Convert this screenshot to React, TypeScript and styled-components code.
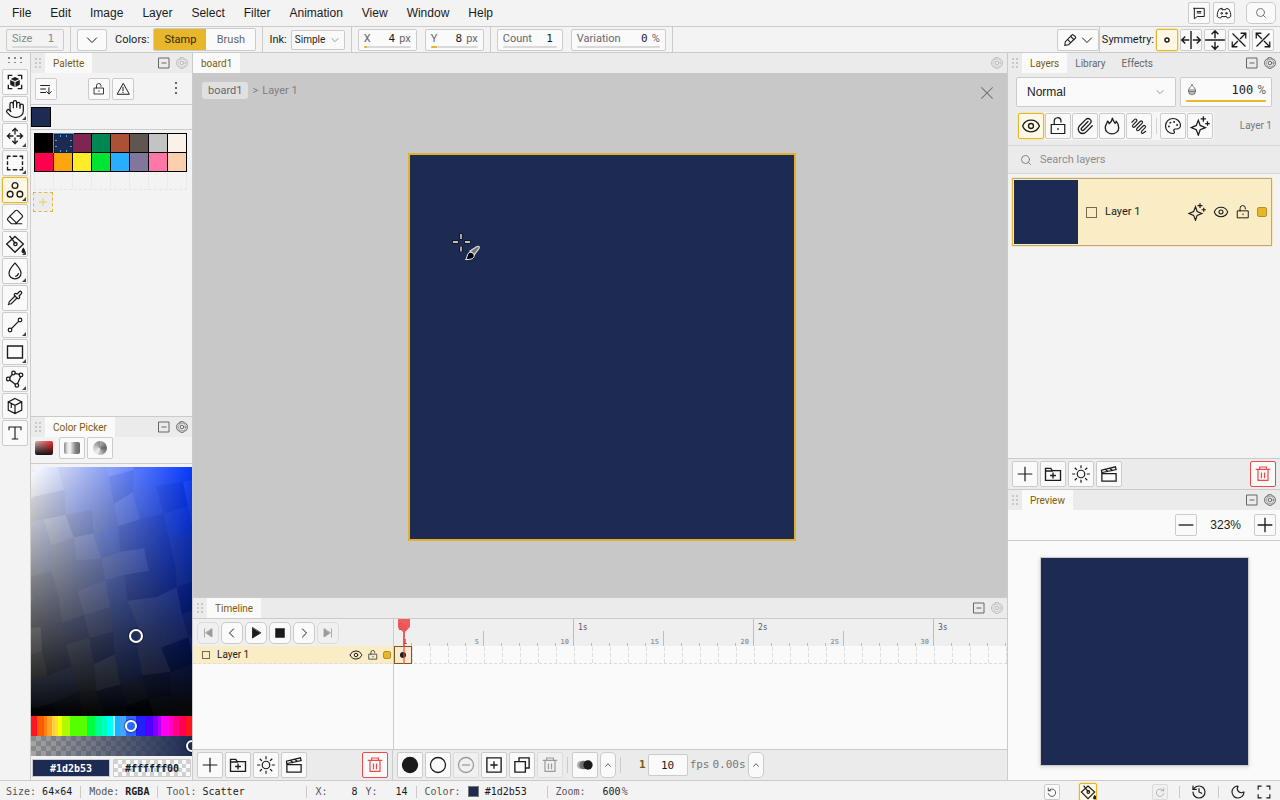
import React, { useLayoutEffect, useRef, useState } from "react";
import styled, { createGlobalStyle, css } from "styled-components";
import { Hand, Eraser, Pipette, Paperclip, Palette, Eye, History, Moon, Search } from "lucide-react";

const c = {
  line: "#cbcbcb",
  bar: "#ebebeb",
  bg: "#f3f3f3",
  soft: "#fafafa",
  ink: "#1b1b1d",
  dim: "#66666a",
  accent: "#e8b62a",
  accentText: "#7a5a08",
  row: "#faedc6",
  navy: "#1d2b53",
  red: "#f04848",
};
const mono = `"DejaVu Sans Mono", "Liberation Mono", monospace`;
const ui = `Roboto, "Noto Sans", sans-serif`;
const sans = `"Liberation Sans", Arial, sans-serif`;

const Global = createGlobalStyle`
  *, *::before, *::after { box-sizing: border-box; }
  body { margin: 0; background: ${c.bg}; color: ${c.ink}; font: 11px/14px ${ui}; }
  button, input, select { font: inherit; color: inherit; margin: 0; padding: 0; }
  button { cursor: pointer; }
  svg { display: block; flex: none; }
`;

/* ---------- icons ---------- */

const Svg = styled.svg`
  fill: none;
  stroke: currentColor;
  stroke-linecap: square;
  stroke-linejoin: miter;
`;

const shapes: Record<string, React.ReactNode> = {
  gear: (
    <>
      <path d="M9 1.500h6l1.500 2.500 3 .5 3 4v7l-3 4-3 .5-1.500 2.500H9L7.500 20l-3-.5-3-4v-7l3-4 3-.5z" />
      <circle cx="12" cy="12" r="7.500" strokeWidth="1" />
      <circle cx="12" cy="12" r="3.700" />
    </>
  ),
  collapse: <path d="M2 2h20v20H2zM8 12h8" />,
  plus: <path d="M12 2v20M2 12h20" />,
  minus: <path d="M2 12h20" />,
  close: <path d="M4 4l16 16M20 4L4 20" />,
  chevron: <path d="M3 8l9 9 9-9" />,
  chevronUp: <path d="M5 16l7-8 7 8" />,
  prev: <path d="M15 4l-8 8 8 8" />,
  next: <path d="M9 4l8 8-8 8" />,
  first: <path fill="currentColor" d="M5 4v16M20 4v16L8 12z" />,
  last: <path fill="currentColor" d="M19 4v16M4 4v16l12-8z" />,
  play: <path fill="currentColor" d="M5 2v20l16-10z" />,
  stop: <path fill="currentColor" d="M4 4h16v16H4z" />,
  lock: <path d="M3 10h18v12H3zM7 10V6a4.500 4.500 0 0 1 9-1v1.500M12 15.500v1" />,
  warn: <path d="M12 3L2 21h20zM12 9v6M12 18v.2" />,
  sort: <path d="M3 6h15M3 12h8M3 18h8M17 10v10M13 16.500l4 4 4-4" />,
  pen: <path d="M3 21l1-6L15 3.500q1.500-1.500 3 0L21 6q1.500 1.500 0 3L9.500 20zM13 5.500l5.500 6M8 11l5 5.500" />,
  box3d: (
    <>
      <path d="M2 7V2h5M17 2h5v5M22 17v5h-5M7 22H2v-5" />
      <path fill="currentColor" stroke="none" d="M12 4.500l6.500 3L12 10.500l-6.500-3zM4.800 9l6.500 3v7.500l-6.500-3.500zM19.200 9l-6.500 3v7.500l6.500-3.500z" />
    </>
  ),
  move: <path d="M12 2v7M12 15v7M2 12h7M15 12h7M9 5l3-3 3 3M9 19l3 3 3-3M5 9l-3 3 3 3M19 9l3 3-3 3" />,
  marquee: <path strokeLinecap="butt" d="M2 7V3h4M9 3h6M18 3h4v4M22 9.500v5M22 17v4h-4M15 21H9M6 21H2v-4M2 14.500v-5" />,
  scatter: (
    <>
      <circle cx="12" cy="6" r="3.800" />
      <circle cx="5.500" cy="17.500" r="3.800" />
      <circle cx="18.500" cy="17.500" r="3.800" />
    </>
  ),
  bucket: (
    <>
      <path d="M12 3l10 9-10 10L2 12zM6 3l6 8" />
      <circle cx="12.500" cy="12" r="2" />
      <path fill="currentColor" d="M22 17.500c1.500 2 1.800 3 1.500 4s-2.500 1-2.800 0 .3-2.500 1.300-4z" />
    </>
  ),
  waterdrop: <path d="M12 1.500C8 6 4 10 4 15a8 7.500 0 0 0 16 0c0-5-4-9-8-13.500zM16.500 15.500c-.3 2-1.500 3-3.500 3.500" />,
  line: (
    <>
      <circle cx="19.500" cy="4.500" r="2.700" />
      <circle cx="4.500" cy="19.500" r="2.700" />
      <path d="M17 7L7 17" />
    </>
  ),
  rect: <path d="M2 4h20v16H2z" />,
  polygon: (
    <>
      <circle cx="10" cy="4" r="2.400" />
      <circle cx="20" cy="6.500" r="2.400" />
      <circle cx="3" cy="12" r="2.400" />
      <circle cx="14.500" cy="20.500" r="2.400" />
      <path d="M12.300 4.500l5.300 1.300M8.300 6L5 10M5 13.500l7.300 5.500M19.500 9l-4 9" />
    </>
  ),
  cube: <path d="M12 2l9 4.500v11L12 22l-9-4.500v-11zM3 6.500l9 4.500 9-4.500M12 11v11M7 9v5" />,
  text: <path d="M3 7V3h18v4M12 3v18M8 21h8" />,
  flame: <path strokeLinejoin="round" d="M12.500 1.500c.5 3 2.500 4.500 3.500 7 1-.5 1.500-1.500 1.500-3 2.500 2.500 3.500 6 3.500 9a9 8 0 0 1-18 0C3 10 5.500 9 6 5.500c1.500 1 2 2 2.200 3.500C10.500 7.500 12 4.500 12.500 1.500z" />,
  squiggle: <path strokeLinecap="round" d="M2.500 7L6 3.500c2-2 4.500.5 2.500 2.500L4 10.500c-2 2 .5 4.500 2.500 2.500l7-7c2-2 4.500.5 2.500 2.500L9.500 15c-2 2 .5 4.500 2.500 2.500l5.500-5.500c2-2 4.500.5 2.500 2.500L16 18.500c-1.500 2-.5 3.500 1 3.500l4-3" />,
  sparkle: <path d="M10 5l2.200 6.300L18.500 14l-6.300 2.500L10 23l-2.500-6.500L1.500 14l6-2.700zM16 1v5M13.500 3.500h5M21 7v4M19 9h4" />,
  folder: <path d="M2 20.500v-16h7l2 3h11v13zM2 8h9M12 11v6M9 14h6" />,
  sun: (
    <>
      <circle cx="12" cy="12" r="5" />
      <path d="M12 1v2.500M12 20.500V23M1 12h2.500M20.500 12H23M4.200 4.200L6 6M18 18l1.800 1.800M4.200 19.800L6 18M18 6l1.800-1.800" />
    </>
  ),
  clapper: <path d="M2.500 11.500h19v10h-19zM2.500 11.500L2 7l18.500-4.500 1 3.500L3 10M7.500 6l2.500 2.500M13.500 4.500L16 7" />,
  trash: <path d="M4.500 5.500v16h15v-16M2 5h20M7 5V1.500h10V5M9.700 10.500v7M14.300 10.500v7" />,
  disc: <circle fill="currentColor" cx="12" cy="12" r="10" />,
  ring: <circle cx="12" cy="12" r="10" />,
  ringMinus: (
    <>
      <circle cx="12" cy="12" r="10" />
      <path d="M7.500 12h9" />
    </>
  ),
  boxPlus: <path d="M2.500 2.500h19v19h-19zM12 8v8M8 12h8" />,
  copy: <path d="M2.500 7.500h14v14h-14zM8 7V2.500h13.500V16H17" />,
  onion: (
    <>
      <circle fill="#b4b4b4" stroke="none" cx="6" cy="12" r="6" />
      <circle fill="#707070" stroke="none" cx="10" cy="12" r="6.500" />
      <circle fill="#1b1b1d" stroke="none" cx="16.500" cy="12" r="7" />
    </>
  ),
  chat: <path d="M3 4h18v14H9l-5 4V4M9 9.500h6M9 12h6" />,
  discord: (
    <>
      <path d="M8.500 5l-3.500 1C2.500 9.500 1.500 13.500 2 17.500c2 1.500 3.500 2 5 2l1.500-2.500c2.500.7 4.500.7 7 0l1.500 2.500c1.500 0 3-.5 5-2 .5-4-.5-8-3-11.500L15.500 5l-1 2h-5z" />
      <circle cx="8.500" cy="12.500" r="1.200" />
      <circle cx="15.500" cy="12.500" r="1.200" />
    </>
  ),
  dot: <circle cx="12" cy="12" r="3.500" strokeWidth="2.500" />,
  symH: <path d="M12 2v20M9 12H1M15 12h8M4.500 8.500L1 12l3.500 3.500M19.500 8.500L23 12l-3.500 3.500" />,
  symV: <path d="M1 12h22M12 9V1M12 15v8M8.500 4.500L12 1l3.500 3.500M8.500 19.500L12 23l3.500-3.500" />,
  symD1: <path d="M4 4l16 16M14 10l7-7M10 14l-7 7M15 3h6v6M3 15v6h6" />,
  symD2: <path d="M20 4L4 20M10 10L3 3M14 14l7 7M9 3H3v6M15 21h6v-6" />,
  drop: <path d="M12 2C8 6 5 10 5 14.500a7 7 0 0 0 14 0C19 10 16 6 12 2zM5 12h14M5.500 15h13M7 18h10" />,
  undo: <path d="M3 3v6h6M4 9a9 9 0 1 1-1 7" />,
  redo: <path d="M21 3v6h-6M20 9a9 9 0 1 0 1 7" />,
  full: <path d="M2 7V2h5M17 2h5v5M22 17v5h-5M7 22H2v-5" />,
};

function Icon({ name, size = 18, w = 1.7 }: { name: string; size?: number; w?: number }) {
  return (
    <Svg width={size} height={size} viewBox="0 0 24 24" strokeWidth={w} aria-hidden="true">
      {shapes[name]}
    </Svg>
  );
}

/* ---------- shared parts ---------- */

const Spacer = styled.div`
  flex: 1;
`;

const IconButton = styled.button<{ $s?: number; $w?: number; $on?: boolean; $danger?: boolean; $corner?: boolean; $round?: boolean }>`
  position: relative;
  display: flex;
  align-items: center;
  justify-content: center;
  gap: 4px;
  flex: none;
  width: ${(p) => p.$w ?? p.$s ?? 22}px;
  height: ${(p) => p.$s ?? 22}px;
  border: 1px solid ${c.line};
  border-radius: ${(p) => (p.$round ? 5 : 2)}px;
  background: ${c.soft};
  color: ${c.ink};
  ${(p) => p.$on && css`border-color: ${c.accent}; background: #fff8e4; box-shadow: 0 0 0 1px #f4e7c0;`}
  ${(p) => p.$danger && css`border-color: ${c.red}; color: ${c.red};`}
  &:disabled { color: #9b9b9b; background: #f0f0f0; border-color: #dcdcdc; cursor: default; }
  ${(p) => p.$corner && css`
    &::after {
      content: "";
      position: absolute;
      right: 1px;
      bottom: 1px;
      border: 2px solid transparent;
      border-right-color: #444;
      border-bottom-color: #444;
    }
  `}
`;

const Divider = styled.span<{ $h?: number }>`
  flex: none;
  width: 1px;
  height: ${(p) => (p.$h ? `${p.$h}px` : "auto")};
  align-self: ${(p) => (p.$h ? "center" : "stretch")};
  background: ${c.line};
`;

/* ---------- menu ---------- */

const Page = styled.div`
  display: flex;
  flex-direction: column;
  height: 100vh;
  overflow: hidden;
`;

const MenuBar = styled.header`
  display: flex;
  align-items: center;
  flex: none;
  height: 27px;
  padding: 0 4px 0 12px;
  gap: 3px;
  border-bottom: 1px solid ${c.line};
`;

const Menu = styled.nav`
  display: flex;
  gap: 19px;
  flex: 1;
`;

const MenuItem = styled.button`
  border: 0;
  background: none;
  font: 12px/16px ${sans};
`;

const SearchButton = styled(IconButton)`
  margin-left: 8px;
`;

/* ---------- tool options ---------- */

const Options = styled.div`
  display: flex;
  align-items: center;
  flex: none;
  height: 26px;
  padding: 0 6px;
  gap: 6px;
  border-bottom: 1px solid ${c.line};
`;

const OptionGroup = styled.div<{ $gap?: number }>`
  display: flex;
  align-items: center;
  align-self: stretch;
  gap: ${(p) => p.$gap ?? 8}px;
`;

const FieldBox = styled.label<{ $w: number; $off?: boolean }>`
  display: grid;
  grid-template-columns: auto 1fr auto;
  align-items: center;
  column-gap: 4px;
  width: ${(p) => p.$w}px;
  height: 22px;
  padding: 2px 5px;
  border: 1px solid ${c.line};
  border-radius: 2px;
  background: ${(p) => (p.$off ? c.bg : c.soft)};
  color: ${(p) => (p.$off ? "#8a8a8a" : c.dim)};
  line-height: 14px;
`;

const FieldUnit = styled.span`
  &:empty { margin-left: -4px; }
`;

const FieldValue = styled.input`
  width: 100%;
  min-width: 0;
  height: 14px;
  border: 0;
  background: none;
  text-align: right;
  font-family: ${mono};
  color: ${c.ink};
  &:disabled { color: #8a8a8a; }
`;

const Track = styled.input`
  appearance: none;
  grid-column: 1 / -1;
  display: block;
  width: 100%;
  height: 2px;
  border-radius: 1px;
  background: linear-gradient(${c.accent}, ${c.accent}) 0 0 / var(--fill) 100% no-repeat #d9d9d9;
  &::-webkit-slider-thumb { appearance: none; width: 1px; height: 2px; }
`;

function Field({ label, value, unit, width, fill = 0, off }: { label: string; value: string; unit?: string; width: number; fill?: number; off?: boolean }) {
  return (
    <FieldBox $w={width} $off={off}>
      <span>{label}</span>
      <FieldValue defaultValue={value} disabled={off} aria-label={label} />
      <FieldUnit>{unit}</FieldUnit>
      <Track type="range" defaultValue={fill} disabled={off} aria-label={`${label} slider`} style={{ "--fill": `${fill}%` } as React.CSSProperties} />
    </FieldBox>
  );
}

const Segments = styled.div`
  display: flex;
  height: 23px;
  border: 1px solid ${c.line};
  border-radius: 2px;
  overflow: hidden;
`;

const Segment = styled.button<{ $on?: boolean }>`
  width: ${(p) => (p.$on ? 52 : 49)}px;
  border: 0;
  background: ${(p) => (p.$on ? c.accent : c.soft)};
  color: ${(p) => (p.$on ? "#33270a" : c.dim)};
`;

const SelectBox = styled.div<{ $h: number; $w?: number }>`
  display: grid;
  align-items: center;
  height: ${(p) => p.$h}px;
  ${(p) => (p.$w ? `width: ${p.$w}px` : "flex: 1")};
  border: 1px solid ${c.line};
  border-radius: 2px;
  background: ${c.soft};
  & > * { grid-area: 1 / 1; }
  & > svg { justify-self: end; margin-right: ${(p) => (p.$h > 24 ? 11 : 5)}px; pointer-events: none; color: ${c.dim}; }
`;

const Select = styled.select<{ $big?: boolean }>`
  appearance: none;
  width: 100%;
  height: 100%;
  padding: 0 ${(p) => (p.$big ? 10 : 3)}px;
  border: 0;
  background: none;
  font: ${(p) => (p.$big ? `12px/16px ${sans}` : `10px/14px ${ui}`)};
`;

/* ---------- docks ---------- */

const Main = styled.main`
  display: flex;
  flex: 1;
  min-height: 0;
`;

const Tools = styled.aside`
  display: flex;
  flex-direction: column;
  flex: none;
  width: 31px;
  padding: 4px 2px;
  gap: 1px;
  border-right: 1px solid ${c.line};
`;

const ToolGrip = styled.span`
  width: 14px;
  height: 6px;
  margin: 0 6px 5px;
  background: radial-gradient(circle at 1px 1px, #888 1px, transparent 1px) 0 0 / 6px 5px;
`;

const Dock = styled.section<{ $w?: number }>`
  display: flex;
  flex-direction: column;
  min-width: 0;
  ${(p) => (p.$w ? `flex: none; width: ${p.$w}px` : "flex: 1")};
`;

const LeftDock = styled(Dock)`
  border-right: 1px solid ${c.line};
`;

const CenterDock = styled(Dock)`
  border-right: 1px solid ${c.line};
`;

const Panel = styled.section<{ $grow?: boolean; $top?: boolean }>`
  display: flex;
  flex-direction: column;
  flex: ${(p) => (p.$grow ? "1" : "none")};
  min-height: 0;
  border-top: ${(p) => (p.$top ? `1px solid ${c.line}` : "0")};
`;

const TabBar = styled.div`
  display: flex;
  align-items: center;
  flex: none;
  height: 20px;
  padding-right: 4px;
  gap: 6px;
  background: ${c.bar};
`;

const Grip = styled.span`
  width: 6px;
  height: 10px;
  margin: 0 -2px 0 4px;
  background: radial-gradient(circle at 1px 1px, #c8c8c8 1px, transparent 1px) 0 0 / 4px 4px;
`;

const TabList = styled.div`
  display: flex;
  flex: 1;
  height: 100%;
`;

const Tab = styled.button<{ $on?: boolean }>`
  height: 100%;
  padding: 2px 8px 0;
  border: 0;
  font-size: 10px;
  background: ${(p) => (p.$on ? c.soft : "none")};
  color: ${(p) => (p.$on ? c.accentText : c.dim)};
`;

const TabAction = styled.button`
  border: 0;
  background: none;
  color: ${c.dim};
  &:disabled { color: #b9b9b9; }
`;

function Tabs({ names, grip = true, collapse = true, gearOff }: { names: string[]; grip?: boolean; collapse?: boolean; gearOff?: boolean }) {
  return (
    <TabBar>
      {grip && <Grip />}
      <TabList role="tablist">
        {names.map((n, i) => (
          <Tab key={n} role="tab" aria-selected={i === 0} $on={i === 0}>{n}</Tab>
        ))}
      </TabList>
      {collapse && <TabAction aria-label="Collapse"><Icon name="collapse" size={12} w={2} /></TabAction>}
      <TabAction aria-label="Panel settings" disabled={gearOff}><Icon name="gear" size={12} w={2} /></TabAction>
    </TabBar>
  );
}

/* ---------- palette ---------- */

const PaletteBar = styled.div`
  display: flex;
  align-items: center;
  height: 32px;
  padding: 0 4px;
  gap: 2px;
  border-bottom: 1px solid ${c.line};
`;

const PaletteActions = styled.div`
  display: flex;
  gap: 2px;
  flex: 1;
  margin-left: 29px;
`;

const Kebab = styled.button`
  display: flex;
  align-items: center;
  justify-content: center;
  width: 24px;
  height: 22px;
  border: 0;
  background: none;
  color: ${c.dim};
`;

const CurrentRow = styled.div`
  padding: 2px 0;
  height: 25px;
  border-bottom: 1px solid ${c.line};
`;

const Current = styled.button`
  display: block;
  width: 20px;
  height: 20px;
  border: 1px solid #000;
  background: ${c.navy};
`;

const SwatchGrid = styled.div`
  display: grid;
  grid-template-columns: repeat(8, 19px);
  grid-auto-rows: 19px;
  width: 153px;
  margin: 3px 0 0 3px;
  border: solid #000;
  border-width: 1px 0 0 1px;
`;

const Swatch = styled.button<{ $c: string; $sel?: boolean }>`
  border: 0 solid #000;
  border-width: 0 1px 1px 0;
  background: ${(p) => p.$c};
  ${(p) => p.$sel && css`
    border: 1px solid #15203f;
    outline: 1px solid #4f94c4;
    background:
      linear-gradient(90deg, transparent 5px, #29adff 5px 6px, transparent 6px 11px, #29adff 11px 12px, transparent 12px) 0 0 / 100% 2px no-repeat,
      linear-gradient(90deg, transparent 5px, #29adff 5px 6px, transparent 6px 11px, #29adff 11px 12px, transparent 12px) 0 100% / 100% 2px no-repeat,
      linear-gradient(transparent 5px, #29adff 5px 6px, transparent 6px 11px, #29adff 11px 12px, transparent 12px) 0 0 / 2px 100% no-repeat,
      linear-gradient(transparent 5px, #29adff 5px 6px, transparent 6px 11px, #29adff 11px 12px, transparent 12px) 100% 0 / 2px 100% no-repeat,
      ${p.$c};
  `}
`;

const EmptyRow = styled.div`
  width: 153px;
  height: 18px;
  margin-left: 3px;
  border-bottom: 1px dashed #e6e6e6;
  background: repeating-linear-gradient(90deg, #eaeaea 0 1px, transparent 1px 19px);
`;

const AddSwatch = styled.button`
  display: flex;
  align-items: center;
  justify-content: center;
  width: 20px;
  height: 20px;
  margin: 2px;
  border: 1px dashed ${c.accent};
  background: #ececec;
  color: #ecd28a;
`;

const swatches = [
  "#000000", "#1d2b53", "#7e2553", "#008751", "#ab5236", "#5f574f", "#c2c3c3", "#faf1e8",
  "#ff004d", "#ffa50f", "#ffec27", "#00e436", "#29adff", "#83769c", "#ff77a8", "#fbcfae",
];

/* ---------- colour picker ---------- */

const PickerBar = styled.div`
  display: flex;
  height: 27px;
  padding: 0 4px;
  gap: 2px;
  border-bottom: 1px solid ${c.line};
`;

const Mode = styled.button<{ $on?: boolean }>`
  display: flex;
  align-items: center;
  justify-content: center;
  width: ${(p) => (p.$on ? 18 : 26)}px;
  height: 22px;
  margin-right: ${(p) => (p.$on ? 4 : 0)}px;
  border: ${(p) => (p.$on ? "0" : `1px solid ${c.line}`)};
  border-radius: 2px;
  background: ${(p) => (p.$on ? "none" : c.soft)};
`;

const ModeArt = styled.span<{ $kind: "field" | "bars" | "wheel" }>`
  width: ${(p) => (p.$kind === "field" ? 18 : p.$kind === "bars" ? 16 : 14)}px;
  height: ${(p) => (p.$kind === "bars" ? 12 : 14)}px;
  border-radius: ${(p) => (p.$kind === "wheel" ? "50%" : "2px")};
  background: ${(p) =>
    p.$kind === "field"
      ? "linear-gradient(0deg, #111, transparent), linear-gradient(90deg, #c9b5b5, #ff2424)"
      : p.$kind === "bars"
      ? "linear-gradient(90deg, #888, #eee 25% 40%, #bbb 55%, #888 70%, #666)"
      : "conic-gradient(#aaa, #666 25%, #999 40%, #eee 60%, #ccc 75%, #888)"};
`;

const ColorField = styled.div`
  position: relative;
  height: 249px;
  margin-top: 3px;
  overflow: hidden;
  background: linear-gradient(180deg, transparent, #000 98%), linear-gradient(90deg, #fff, #0033ff);
  & > svg { width: 100%; height: 100%; }
`;

const Handle = styled.span<{ $d: number }>`
  position: absolute;
  width: ${(p) => p.$d}px;
  height: ${(p) => p.$d}px;
  border: 2px solid #fff;
  border-radius: 50%;
  box-shadow: 0 0 1px 1px rgba(0, 0, 0, 0.4);
  transform: translate(-50%, -50%);
  pointer-events: none;
`;

const hues: [string, number][] = [
  ["#ff1420", 0], ["#ff5a00", 4], ["#ff8210", 8], ["#ffa423", 10], ["#fcd045", 13], ["#ffe22b", 15], ["#f8ff00", 17],
  ["#b2f800", 19], ["#55ff00", 24], ["#00ff40", 35], ["#00ff92", 40], ["#00ffc0", 44], ["#00ffff", 47], ["#b8f0ff", 51],
  ["#10b8ff", 52], ["#4aa2ff", 55], ["#2a68ff", 59], ["#2222ff", 65], ["#5000ff", 71], ["#8000ff", 76], ["#b400ff", 79],
  ["#ff00f2", 81], ["#ff00ba", 86], ["#ff0088", 89], ["#ff0050", 92], ["#ff1420", 96], ["#ff1420", 100],
];
const hueStops = hues.slice(0, -1).map(([h, s], i) => `${h} ${s}% ${hues[i + 1][1]}%`).join(", ");
const checks = "repeating-conic-gradient(#a6a6a6 0 25%, #8b8b8b 0 50%) 0 0 / 10px 10px";

const Strip = styled.div<{ $alpha?: boolean }>`
  position: relative;
  height: 20px;
  overflow: hidden;
  background: ${(p) => (p.$alpha ? `linear-gradient(90deg, transparent, ${c.navy}), ${checks}` : `linear-gradient(90deg, ${hueStops})`)};
`;

const StripInput = styled.input`
  appearance: none;
  display: block;
  width: 100%;
  height: 100%;
  background: none;
  &::-webkit-slider-thumb { appearance: none; width: 1px; height: 20px; }
`;

const HexRow = styled.div`
  display: flex;
  gap: 3px;
  padding: 3px 1px;
`;

const Hex = styled.button<{ $clear?: boolean }>`
  flex: 1;
  height: 18px;
  padding-top: 1px;
  border: 1px solid ${c.line};
  border-radius: 1px;
  font: bold 10px/14px ${mono};
  color: ${(p) => (p.$clear ? c.ink : "#fff")};
  background: ${(p) => (p.$clear ? "repeating-conic-gradient(#fafafa 0 25%, #d0d0d0 0 50%) 0 0 / 8px 8px" : c.navy)};
`;

const noise = (n: number) => {
  const v = Math.sin(n * 127.1) * 43758.5453;
  return v - Math.floor(v);
};

/* Angular facets laid over the smooth field. */
function Facets() {
  const cols = 7;
  const rows = 10;
  const pt = (i: number, j: number) => {
    const k = i * 31 + j * 7 + 3;
    return [((i + j * 0.2 + noise(k) * 0.3) * 161) / cols, ((j + noise(k + 99) * 0.3 - i * 0.25) * 249) / rows];
  };
  const cells = [];
  for (let j = -1; j <= rows + 3; j++)
    for (let i = -4; i <= cols + 1; i++) {
      const pts = [pt(i, j), pt(i + 1, j), pt(i + 1, j + 1), pt(i, j + 1)].map((p) => p.join(",")).join(" ");
      const tone = ["#ffffff", "#203060", "#6a94ff", "#a09a90"][Math.floor(noise(i * 17 + j * 5 + 40) * 4)];
      cells.push(<polygon key={`${i}/${j}`} points={pts} fill={tone} opacity={j > 8 ? 0.03 : 0.07} />);
    }
  return <svg viewBox="0 0 161 249" preserveAspectRatio="none" aria-hidden="true">{cells}</svg>;
}

/* ---------- viewport ---------- */

const Viewport = styled.div`
  position: relative;
  display: flex;
  flex: 1;
  align-items: center;
  justify-content: center;
  min-height: 0;
  padding: 24px 0 0 4px;
  background: #c8c8c8;
`;

const Artboard = styled.div`
  position: relative;
  flex: none;
  width: 388px;
  height: 388px;
  border: 2px solid #e2b02c;
  background: ${c.navy};
`;

const Cursor = styled.svg`
  position: absolute;
  left: 41px;
  top: 76px;
`;

const Crumbs = styled.nav`
  position: absolute;
  left: 9px;
  top: 9px;
  display: flex;
  align-items: center;
  gap: 4px;
  color: #7e7e82;
`;

const Crumb = styled.button`
  height: 17px;
  padding: 0 6px;
  border: 0;
  border-radius: 3px;
  background: #e0e0e0;
  color: #66666a;
`;

const CloseButton = styled.button`
  position: absolute;
  right: 12px;
  top: 12px;
  border: 0;
  background: none;
  color: #77777a;
`;

/* ---------- timeline ---------- */

const TimelineBody = styled.div`
  display: flex;
  height: 131px;
  border-top: 1px solid ${c.line};
  background: ${c.soft};
`;

const TrackList = styled.div`
  flex: none;
  width: 201px;
  border-right: 1px solid ${c.line};
`;

const Playback = styled.div`
  display: flex;
  align-items: center;
  height: 27px;
  padding: 0 4px;
  gap: 2px;
  background: #efefef;
`;

const TrackRow = styled.div`
  display: flex;
  align-items: center;
  height: 18px;
  padding: 0 2px 0 9px;
  gap: 7px;
  background: ${c.row};
  border-bottom: 1px dashed #ddd;
  font-size: 10px;
`;

const RowIcons = styled.span<{ $gap: number }>`
  display: flex;
  align-items: center;
  gap: ${(p) => p.$gap}px;
`;

const Check = styled.input<{ $d: number }>`
  appearance: none;
  flex: none;
  width: ${(p) => p.$d}px;
  height: ${(p) => p.$d}px;
  border: 1px solid #77694a;
`;

const RowName = styled.span`
  flex: 1;
`;

const Chip = styled.span<{ $d: number }>`
  flex: none;
  width: ${(p) => p.$d}px;
  height: ${(p) => p.$d}px;
  border: 1px solid #b8902a;
  border-radius: 2px;
  background: ${c.accent};
`;

const Plain = styled.button`
  border: 0;
  background: none;
`;

const Frames = styled.div`
  position: relative;
  flex: 1;
  min-width: 0;
  overflow: hidden;
`;

const Ruler = styled.div`
  display: flex;
  height: 27px;
  background: #efefef;
`;

const Tick = styled.div<{ $n: number }>`
  display: flex;
  flex-direction: column;
  justify-content: flex-end;
  flex: none;
  width: 18px;
  height: 27px;
  padding-right: 5px;
  text-align: right;
  font: bold 7px/8px ${mono};
  color: ${(p) => (p.$n === 1 ? c.accentText : "#9a9a9e")};
  background: linear-gradient(#bdbdbd, #bdbdbd) 100% 100% / 1px ${(p) => (p.$n % 10 === 0 ? 27 : p.$n % 5 === 0 ? 15 : 3)}px no-repeat;
`;

const Seconds = styled.span`
  position: absolute;
  top: 4px;
  font: 8px/10px ${mono};
  color: #55555a;
`;

const Cells = styled.div`
  height: 18px;
  border-bottom: 1px dashed #dcdcdc;
  background: repeating-linear-gradient(0deg, transparent 0 4px, ${c.soft} 4px 6px),
    linear-gradient(90deg, #dedede 1px, transparent 1px) 0 0 / 18px 100%;
`;

const Cell = styled.button`
  display: flex;
  align-items: center;
  justify-content: center;
  width: 18px;
  height: 18px;
  border: 1px solid #80581a;
  background: #f7ead0;
  &::before { content: ""; width: 6px; height: 6px; border-radius: 50%; background: #1b1b1d; }
`;

const Playhead = styled.svg`
  position: absolute;
  left: 4px;
  top: 0;
`;

const FRAME = 18;

function FrameGrid() {
  const ref = useRef<HTMLDivElement>(null);
  const [count, setCount] = useState(0);
  useLayoutEffect(() => {
    const el = ref.current!;
    const measure = () => setCount(Math.floor(el.clientWidth / FRAME));
    measure();
    const watch = new ResizeObserver(measure);
    watch.observe(el);
    return () => watch.disconnect();
  }, []);
  const seconds = Math.floor((count - 1) / 10) + 1;
  return (
    <Frames ref={ref}>
      <Ruler>
        {Array.from({ length: count }, (_, i) => i + 1).map((n) => (
          <Tick key={n} $n={n}>{n % 5 === 0 || n === 1 ? n : ""}</Tick>
        ))}
      </Ruler>
      {Array.from({ length: seconds }, (_, s) => (
        <Seconds key={s} style={{ left: s * FRAME * 10 + 4 }}>{s}s</Seconds>
      ))}
      <Cells><Cell aria-label="Frame 1" /></Cells>
      <Playhead width="12" height="45" viewBox="0 0 12 45" aria-hidden="true">
        <path d="M0 0h12v8l-5 5v14H5V13L0 8z" fill={c.red} fillOpacity=".88" />
        <path d="M5 27h2v18H5z" fill={c.red} opacity=".6" />
      </Playhead>
    </Frames>
  );
}

const Footer = styled.div`
  display: flex;
  align-items: center;
  height: 31px;
  border-top: 1px solid ${c.line};
  background: ${c.bar};
`;

const FooterGroup = styled.div<{ $w?: number }>`
  display: flex;
  align-items: center;
  gap: 2px;
  padding: 0 4px;
  ${(p) => p.$w && `width: ${p.$w}px`};
`;

const FooterEnd = styled(FooterGroup)`
  font: 11px/14px ${mono};
  color: #77777c;
  margin-left: 14px;
`;

const FrameNo = styled.b`
  color: ${c.accentText};
`;

const Fps = styled.input`
  width: 40px;
  height: 22px;
  border: 1px solid ${c.line};
  border-radius: 2px;
  background: ${c.soft};
  color: ${c.ink};
  text-align: center;
`;

/* ---------- layers ---------- */

const LayerHead = styled.div`
  display: flex;
  flex-direction: column;
  gap: 5px;
  padding: 4px 8px 5px;
  background: ${c.bar};
  border-bottom: 1px solid #d6d6d6;
`;

const HeadRow = styled.div`
  display: flex;
  align-items: center;
  gap: 4px;
`;

const Opacity = styled.label`
  display: grid;
  grid-template-columns: 12px 1fr auto;
  align-items: center;
  column-gap: 4px;
  width: 92px;
  height: 30px;
  padding: 3px 5px;
  border: 1px solid ${c.line};
  border-radius: 2px;
  background: ${c.soft};
  color: ${c.dim};
  font-size: 12px;
`;

const Filters = styled.div`
  display: flex;
  align-items: center;
  gap: 1px;
  margin-left: 1px;
  padding: 1px;
  border-radius: 3px;
  background: #f6f6f6;
`;

const FilterGap = styled.span`
  width: 1px;
  height: 16px;
  margin: 0 2px 0 3px;
  background: #d4d4d4;
`;

const LayerHint = styled.span`
  flex: 1;
  text-align: right;
  font-size: 10px;
  color: #77777c;
`;

const SearchRow = styled.label`
  display: flex;
  align-items: center;
  gap: 8px;
  height: 28px;
  padding: 0 12px;
  background: ${c.bar};
  border-bottom: 1px solid #d6d6d6;
  color: #77777c;
`;

const SearchInput = styled.input`
  flex: 1;
  border: 0;
  background: none;
  &::placeholder { color: #8d8d90; opacity: 1; }
`;

const LayerList = styled.div`
  flex: 1;
  padding: 4px 8px 4px 4px;
`;

const LayerItem = styled.div`
  display: flex;
  align-items: center;
  height: 68px;
  padding: 0 4px 0 1px;
  gap: 8px;
  border: 1px solid #b9a97c;
  border-left-color: ${c.accent};
  border-radius: 1px;
  box-shadow: 0 0 0 1px #f5e8c0;
  background: ${c.row};
`;

const Thumb = styled.span`
  width: 64px;
  height: 64px;
  background: ${c.navy};
`;

/* ---------- preview ---------- */

const PreviewBar = styled.div`
  display: flex;
  align-items: center;
  justify-content: flex-end;
  height: 31px;
  padding: 0 4px;
  gap: 13px;
  background: ${c.soft};
  border-bottom: 1px solid ${c.line};
  font: 12px/16px ${sans};
`;

const PreviewArea = styled.div`
  display: flex;
  justify-content: center;
  padding: 16px 16px 14px;
  background: ${c.soft};
`;

const PreviewArt = styled.div`
  width: 209px;
  height: 209px;
  border: 1px solid ${c.line};
  box-shadow: 0 1px 4px rgba(0, 0, 0, 0.15);
  background: ${c.navy};
`;

/* ---------- status ---------- */

const Status = styled.footer`
  display: flex;
  align-items: center;
  flex: none;
  height: 20px;
  padding: 2px 9px 0 6px;
  gap: 8px;
  border-top: 1px solid ${c.line};
  font: 10px/14px ${mono};
  color: #55555a;
  white-space: nowrap;
`;

const Stat = styled.span<{ $w?: number }>`
  min-width: ${(p) => p.$w ?? 0}px;
`;

const Value = styled.span<{ $w?: number; $b?: boolean }>`
  display: inline-block;
  min-width: ${(p) => p.$w ?? 0}px;
  margin-left: 6px;
  text-align: right;
  color: ${c.ink};
  font-weight: ${(p) => (p.$b ? "bold" : "normal")};
`;

const Unit = styled.span`
  margin-left: 1px;
`;

const StatusChip = styled.span`
  display: inline-block;
  width: 11px;
  height: 11px;
  margin-left: 7px;
  vertical-align: -2px;
  border: 1px solid #777;
  background: ${c.navy};
`;

const StatusTools = styled.div`
  display: flex;
  align-items: center;
  gap: 11px;
  color: ${c.ink};
`;

const UndoGroup = styled.div`
  display: flex;
  gap: 19px;
  align-items: center;
  margin-right: 44px;
`;

const tools: [string, React.ReactNode, boolean][] = [
  ["Transform", <Icon name="box3d" size={16} w={2} />, false],
  ["Hand", <Hand size={20} strokeWidth={1.5} />, true],
  ["Move", <Icon name="move" />, true],
  ["Select", <Icon name="marquee" w={1.8} />, true],
  ["Scatter", <Icon name="scatter" w={1.8} />, true],
  ["Eraser", <Eraser size={18} strokeWidth={1.6} />, false],
  ["Fill", <Icon name="bucket" size={20} w={1.6} />, true],
  ["Blur", <Icon name="waterdrop" size={18} w={1.6} />, true],
  ["Eyedropper", <Pipette size={16} strokeWidth={1.8} />, false],
  ["Line", <Icon name="line" size={16} w={1.8} />, true],
  ["Rectangle", <Icon name="rect" w={1.8} />, true],
  ["Polygon", <Icon name="polygon" />, true],
  ["Box", <Icon name="cube" w={1.6} />, false],
  ["Text", <Icon name="text" size={16} w={1.7} />, false],
];

function NewButtons() {
  return (
    <>
      <IconButton $s={26} aria-label="Add layer"><Icon name="plus" size={16} w={1.8} /></IconButton>
      <IconButton $s={26} aria-label="Add folder"><Icon name="folder" w={1.8} /></IconButton>
      <IconButton $s={26} aria-label="Add light"><Icon name="sun" w={1.6} /></IconButton>
      <IconButton $s={26} aria-label="Add clip"><Icon name="clapper" w={1.7} /></IconButton>
    </>
  );
}

export default function App() {
  return (
    <Page>
      <Global />
      <MenuBar>
        <Menu>
          {["File", "Edit", "Image", "Layer", "Select", "Filter", "Animation", "View", "Window", "Help"].map((m) => (
            <MenuItem key={m}>{m}</MenuItem>
          ))}
        </Menu>
        <IconButton aria-label="Feedback"><Icon name="chat" size={14} /></IconButton>
        <IconButton aria-label="Discord"><Icon name="discord" size={16} w={1.5} /></IconButton>
        <SearchButton $w={30} $round aria-label="Search"><Search size={12} strokeWidth={1.8} color={c.dim} /></SearchButton>
      </MenuBar>

      <Options>
        <Field label="Size" value="1" width={58} off />
        <Divider />
        <OptionGroup>
          <IconButton $w={30} aria-label="Brush presets"><Icon name="chevron" size={12} w={2} /></IconButton>
          <OptionGroup $gap={4}>
            <span>Colors:</span>
            <Segments>
              <Segment $on>Stamp</Segment>
              <Segment>Brush</Segment>
            </Segments>
          </OptionGroup>
        </OptionGroup>
        <Divider />
        <OptionGroup $gap={4}>
          <label htmlFor="ink">Ink:</label>
          <SelectBox $h={20} $w={54}>
            <Select id="ink"><option>Simple</option></Select>
            <Icon name="chevron" size={8} w={2} />
          </SelectBox>
        </OptionGroup>
        <Divider />
        <OptionGroup>
          <Field label="X" value="4" unit="px" width={59} fill={6} />
          <Field label="Y" value="8" unit="px" width={59} fill={13} />
        </OptionGroup>
        <Divider />
        <OptionGroup>
          <Field label="Count" value="1" width={66} />
          <Field label="Variation" value="0" unit="%" width={95} />
        </OptionGroup>
        <Divider />
        <Spacer />
        <OptionGroup $gap={2}>
          <OptionGroup $gap={0}>
            <IconButton $w={42} aria-label="Pen mode">
              <Icon name="pen" size={14} w={1.8} />
              <Icon name="chevron" size={12} w={2} />
            </IconButton>
            <Divider />
          </OptionGroup>
          <span>Symmetry:</span>
          <IconButton $on aria-label="No symmetry"><Icon name="dot" size={14} /></IconButton>
          <IconButton aria-label="Horizontal"><Icon name="symH" size={20} /></IconButton>
          <IconButton aria-label="Vertical"><Icon name="symV" size={20} /></IconButton>
          <IconButton aria-label="Diagonal up"><Icon name="symD1" size={18} /></IconButton>
          <IconButton aria-label="Diagonal down"><Icon name="symD2" size={18} /></IconButton>
        </OptionGroup>
      </Options>

      <Main>
        <Tools>
          <ToolGrip />
          {tools.map(([name, icon, corner]) => (
            <IconButton key={name} $s={26} $corner={corner} $on={name === "Scatter"} aria-label={name}>{icon}</IconButton>
          ))}
        </Tools>

        <LeftDock $w={162}>
          <Panel $grow>
            <Tabs names={["Palette"]} gearOff />
            <PaletteBar>
              <IconButton aria-label="Sort"><Icon name="sort" size={14} /></IconButton>
              <PaletteActions>
                <IconButton aria-label="Unlock"><Icon name="lock" size={12} /></IconButton>
                <IconButton aria-label="Warnings"><Icon name="warn" size={14} /></IconButton>
              </PaletteActions>
              <Kebab aria-label="More">
                <svg width="4" height="14" viewBox="0 0 4 14" fill="currentColor" aria-hidden="true">
                  <path d="M1 0h2v2H1zM1 5h2v2H1zM1 10h2v2H1z" />
                </svg>
              </Kebab>
            </PaletteBar>
            <CurrentRow><Current aria-label="Current colour" /></CurrentRow>
            <SwatchGrid>
              {swatches.map((s, i) => <Swatch key={s} $c={s} $sel={i === 1} aria-label={s} />)}
            </SwatchGrid>
            <EmptyRow />
            <AddSwatch aria-label="Add colour"><Icon name="plus" size={8} w={4} /></AddSwatch>
          </Panel>
          <Panel $top>
            <Tabs names={["Color Picker"]} />
            <PickerBar>
              <Mode $on aria-label="Field"><ModeArt $kind="field" /></Mode>
              <Mode aria-label="Sliders"><ModeArt $kind="bars" /></Mode>
              <Mode aria-label="Wheel"><ModeArt $kind="wheel" /></Mode>
            </PickerBar>
            <ColorField>
              <Facets />
              <Handle $d={14} style={{ left: "65%", top: "68%" }} />
            </ColorField>
            <Strip>
              <StripInput type="range" defaultValue={62} aria-label="Hue" />
              <Handle $d={12} style={{ left: "62%", top: "50%" }} />
            </Strip>
            <Strip $alpha>
              <StripInput type="range" defaultValue={100} aria-label="Alpha" />
              <Handle $d={12} style={{ left: "100%", top: "50%" }} />
            </Strip>
            <HexRow>
              <Hex>#1d2b53</Hex>
              <Hex $clear>#ffffff00</Hex>
            </HexRow>
          </Panel>
        </LeftDock>

        <CenterDock>
          <Tabs names={["board1"]} grip={false} collapse={false} gearOff />
          <Viewport>
            <Artboard>
              <Cursor width="30" height="32" viewBox="0 0 30 32" aria-hidden="true">
                <path d="M10 2.500v6M10 15v6M1.500 11h6M13.500 11h6" stroke="#000" strokeWidth="3" />
                <path d="M10 3v5M10 15.500v5M2 11h5M14 11h5" stroke="#fff" strokeWidth="1.300" />
                <path d="M19 20l7-4.500q3-1 2 2l-5 6.500z" fill="#777" stroke="#ddd" strokeWidth="1.200" />
                <path d="M14.500 28.500c2-1 1-5 3.500-7 2-1 6 1 5 4-1 3-5 3-8.500 3z" fill="#000" stroke="#fff" />
              </Cursor>
            </Artboard>
            <Crumbs>
              <Crumb>board1</Crumb>
              <span>&gt;</span>
              <span>Layer 1</span>
            </Crumbs>
            <CloseButton aria-label="Close"><Icon name="close" size={16} w={1.6} /></CloseButton>
          </Viewport>
          <Panel $top>
            <Tabs names={["Timeline"]} gearOff />
            <TimelineBody>
              <TrackList>
                <Playback>
                  <IconButton $round disabled aria-label="First frame"><Icon name="first" size={12} /></IconButton>
                  <IconButton $round aria-label="Previous frame"><Icon name="prev" size={12} w={2} /></IconButton>
                  <IconButton $round aria-label="Play"><Icon name="play" size={12} /></IconButton>
                  <IconButton $round aria-label="Stop"><Icon name="stop" size={12} w={3} /></IconButton>
                  <IconButton $round aria-label="Next frame"><Icon name="next" size={12} w={2} /></IconButton>
                  <IconButton $round disabled aria-label="Last frame"><Icon name="last" size={12} /></IconButton>
                </Playback>
                <TrackRow>
                  <Check $d={8} type="checkbox" aria-label="Select Layer 1 track" />
                  <RowName>Layer 1</RowName>
                  <RowIcons $gap={5}>
                    <Plain aria-label="Visible"><Eye size={14} strokeWidth={1.7} /></Plain>
                    <Plain aria-label="Unlocked"><Icon name="lock" size={10} /></Plain>
                    <Chip $d={8} />
                  </RowIcons>
                </TrackRow>
              </TrackList>
              <FrameGrid />
            </TimelineBody>
            <Footer>
              <FooterGroup $w={199}>
                <NewButtons />
                <Spacer />
                <IconButton $s={26} $danger aria-label="Delete layer"><Icon name="trash" size={16} w={1.8} /></IconButton>
              </FooterGroup>
              <Divider />
              <FooterGroup>
                <IconButton $s={26} aria-label="Keyframe"><Icon name="disc" /></IconButton>
                <IconButton $s={26} aria-label="Empty keyframe"><Icon name="ring" /></IconButton>
                <IconButton $s={26} disabled aria-label="Remove keyframe"><Icon name="ringMinus" /></IconButton>
                <IconButton $s={26} aria-label="Add frame"><Icon name="boxPlus" size={18} w={1.8} /></IconButton>
                <IconButton $s={26} aria-label="Duplicate frame"><Icon name="copy" size={18} w={1.8} /></IconButton>
                <IconButton $s={26} disabled aria-label="Delete frame"><Icon name="trash" size={16} w={1.8} /></IconButton>
              </FooterGroup>
              <Divider $h={16} />
              <FooterGroup>
                <IconButton $s={26} aria-label="Onion skin"><Icon name="onion" size={16} /></IconButton>
                <IconButton $s={26} $w={16} $round aria-label="Onion skin options"><Icon name="chevronUp" size={8} w={2} /></IconButton>
              </FooterGroup>
              <Divider $h={16} />
              <FooterEnd>
                <FrameNo>1</FrameNo>
                <Fps defaultValue="10" aria-label="Frames per second" />
                <span>fps</span>
                <Unit>0.00s</Unit>
                <IconButton $s={26} $w={16} $round aria-label="Playback options"><Icon name="chevronUp" size={8} w={2} /></IconButton>
              </FooterEnd>
            </Footer>
          </Panel>
        </CenterDock>

        <Dock $w={272}>
          <Panel $grow>
            <Tabs names={["Layers", "Library", "Effects"]} />
            <LayerHead>
              <HeadRow>
                <SelectBox $h={30}>
                  <Select $big aria-label="Blend mode"><option>Normal</option></Select>
                  <Icon name="chevron" size={8} w={2} />
                </SelectBox>
                <Opacity>
                  <Icon name="drop" size={12} />
                  <FieldValue defaultValue="100" aria-label="Opacity" />
                  <span>%</span>
                  <Track type="range" defaultValue={100} aria-label="Opacity slider" style={{ "--fill": "100%" } as React.CSSProperties} />
                </Opacity>
              </HeadRow>
              <HeadRow>
                <Filters>
                  <IconButton $s={26} $on aria-label="Visible"><Eye size={20} strokeWidth={1.6} /></IconButton>
                  <IconButton $s={26} aria-label="Lock"><Icon name="lock" size={18} w={1.6} /></IconButton>
                  <IconButton $s={26} aria-label="Clip"><Paperclip size={18} strokeWidth={1.7} /></IconButton>
                  <IconButton $s={26} aria-label="Burn"><Icon name="flame" size={18} w={1.7} /></IconButton>
                  <IconButton $s={26} aria-label="Wave"><Icon name="squiggle" w={1.5} /></IconButton>
                  <FilterGap />
                  <IconButton $s={26} aria-label="Palette"><Palette size={18} strokeWidth={1.6} /></IconButton>
                  <IconButton $s={26} aria-label="Effects"><Icon name="sparkle" size={20} w={1.5} /></IconButton>
                </Filters>
                <LayerHint>Layer 1</LayerHint>
              </HeadRow>
            </LayerHead>
            <SearchRow>
              <Search size={12} strokeWidth={1.8} />
              <SearchInput placeholder="Search layers" aria-label="Search layers" />
            </SearchRow>
            <LayerList>
              <LayerItem>
                <Thumb />
                <Check $d={11} type="checkbox" aria-label="Select Layer 1" />
                <RowName>Layer 1</RowName>
                <RowIcons $gap={7}>
                  <Plain aria-label="Effects"><Icon name="sparkle" size={18} w={1.6} /></Plain>
                  <Plain aria-label="Visible"><Eye size={16} strokeWidth={1.6} /></Plain>
                  <Plain aria-label="Unlocked"><Icon name="lock" size={14} /></Plain>
                  <Chip $d={10} />
                </RowIcons>
              </LayerItem>
            </LayerList>
            <Footer>
              <FooterGroup><NewButtons /></FooterGroup>
              <Spacer />
              <FooterGroup>
                <IconButton $s={26} $danger aria-label="Delete layer"><Icon name="trash" size={16} w={1.8} /></IconButton>
              </FooterGroup>
            </Footer>
          </Panel>
          <Panel $top>
            <Tabs names={["Preview"]} />
            <PreviewBar>
              <IconButton aria-label="Zoom out"><Icon name="minus" size={16} w={2} /></IconButton>
              <span>323%</span>
              <IconButton aria-label="Zoom in"><Icon name="plus" size={16} w={2} /></IconButton>
            </PreviewBar>
            <PreviewArea><PreviewArt /></PreviewArea>
          </Panel>
        </Dock>
      </Main>

      <Status>
        <Stat>Size:<Value>64×64</Value></Stat>
        <Divider $h={12} />
        <Stat>Mode:<Value $b>RGBA</Value></Stat>
        <Divider $h={12} />
        <Stat $w={132}>Tool:<Value>Scatter</Value></Stat>
        <Divider $h={12} />
        <Stat>X:<Value $w={24}>8</Value></Stat>
        <Stat>Y:<Value $w={24}>14</Value></Stat>
        <Divider $h={12} />
        <Stat $w={114}>Color:<StatusChip /><Value>#1d2b53</Value></Stat>
        <Divider $h={12} />
        <Stat>Zoom:<Value $w={29}>600</Value><Unit>%</Unit></Stat>
        <Spacer />
        <StatusTools>
          <UndoGroup>
            <IconButton $s={16} aria-label="Undo"><Icon name="undo" size={10} /></IconButton>
            <IconButton $s={18} $on aria-label="Fill"><Icon name="bucket" size={16} /></IconButton>
          </UndoGroup>
          <IconButton $s={16} disabled aria-label="Redo"><Icon name="redo" size={10} /></IconButton>
          <Divider $h={12} />
          <Plain aria-label="History"><History size={16} strokeWidth={1.8} /></Plain>
          <Divider $h={12} />
          <Plain aria-label="Theme"><Moon size={16} strokeWidth={1.7} /></Plain>
          <Plain aria-label="Full screen"><Icon name="full" size={14} w={2} /></Plain>
        </StatusTools>
      </Status>
    </Page>
  );
}
